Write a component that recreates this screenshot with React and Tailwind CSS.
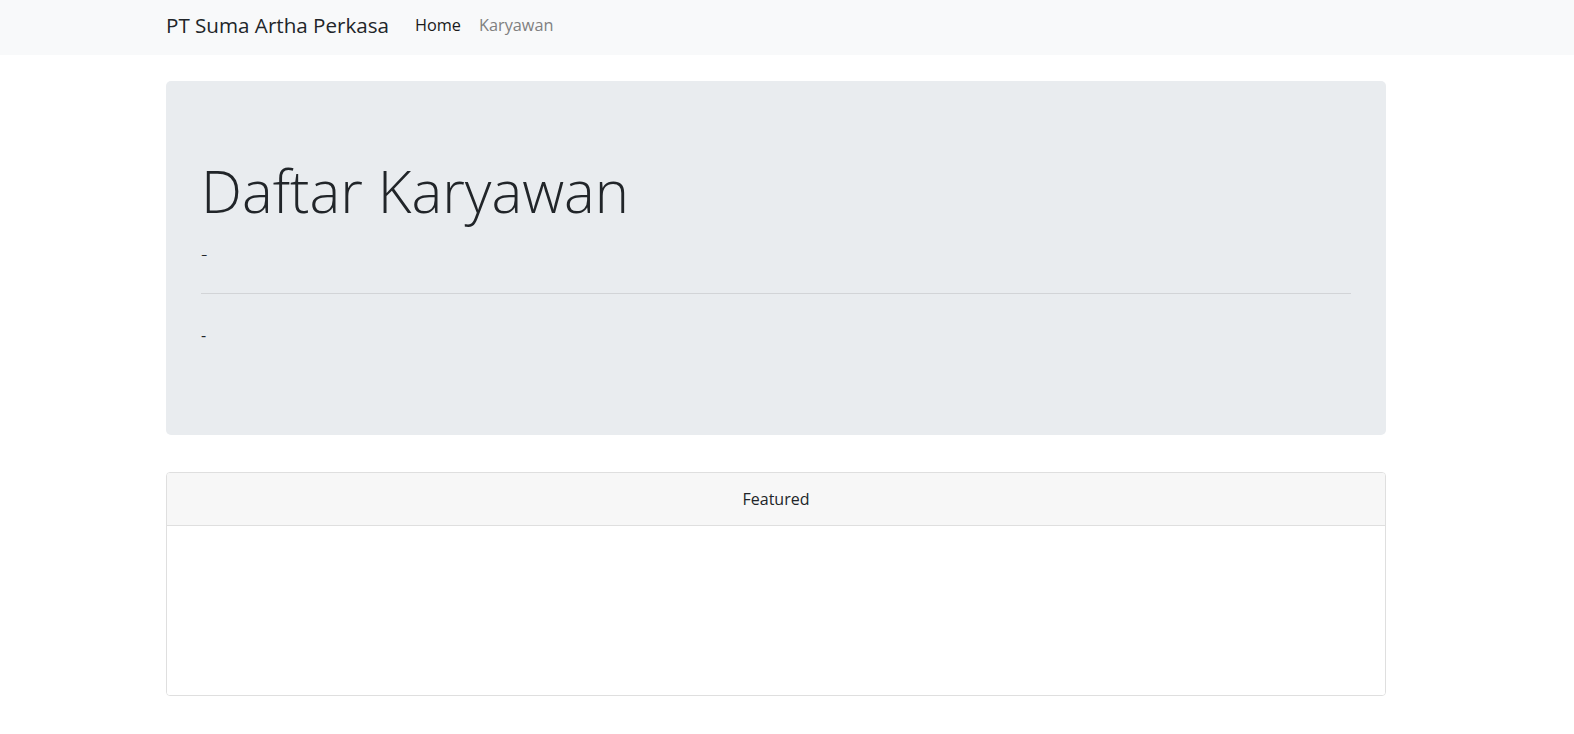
import React from 'react';

const font = { fontFamily: '"Open Sans", "Noto Sans", sans-serif' };

const navItems = [
    { key: 'home', label: 'Home', active: true },
    { key: 'karyawan', label: 'Karyawan', active: false }
];

const Navbar = () => (
    <nav className="bg-[#f8f9fa] h-[55px]">
        <div className="w-[1220px] ml-[166px] h-full flex items-center pb-[5px]">
            <a className="text-[20.6px] text-[#212529] mr-[26px] leading-[30px]">PT Suma Artha Perkasa</a>
            <ul className="flex items-center gap-[18px]">
                {navItems.map(item => (
                    <li key={item.key}>
                        <a className={`text-[16.3px] leading-[24px] ${item.active ? 'text-[#1a1a1a]' : 'text-[#808080]'}`}>
                            {item.label}
                        </a>
                    </li>
                ))}
            </ul>
        </div>
    </nav>
);

const Jumbotron = () => (
    <div className="bg-[#e9ecef] rounded-[5px] h-[354px] px-[35px] pt-[75px]">
        <h1 className="text-[58px] font-light leading-[1.2] text-[#212529] mb-[13px]">Daftar Karyawan</h1>
        <p className="text-[20px] font-light leading-[30px] text-[#212529]">-</p>
        <hr className="mt-[24px] border-0 border-t border-[#d2d4d7]" />
        <p className="mt-[29px] text-[16px] leading-[24px] text-[#212529]">-</p>
    </div>
);

const Card = () => (
    <div className="mt-[37px] h-[224px] border border-[#dfdfdf] rounded-[4px] overflow-hidden flex flex-col">
        <div className="h-[53px] bg-[#f7f7f7] border-b border-[#dfdfdf] flex items-center justify-center text-[16px] text-[#212529]">
            Featured
        </div>
        <div className="flex-1 bg-white" />
    </div>
);

export default function App() {
    return (
        <div className="min-h-screen bg-white" style={font}>
            <Navbar />
            <main className="w-[1220px] ml-[166px] pt-[26px]">
                <Jumbotron />
                <Card />
            </main>
        </div>
    );
}
